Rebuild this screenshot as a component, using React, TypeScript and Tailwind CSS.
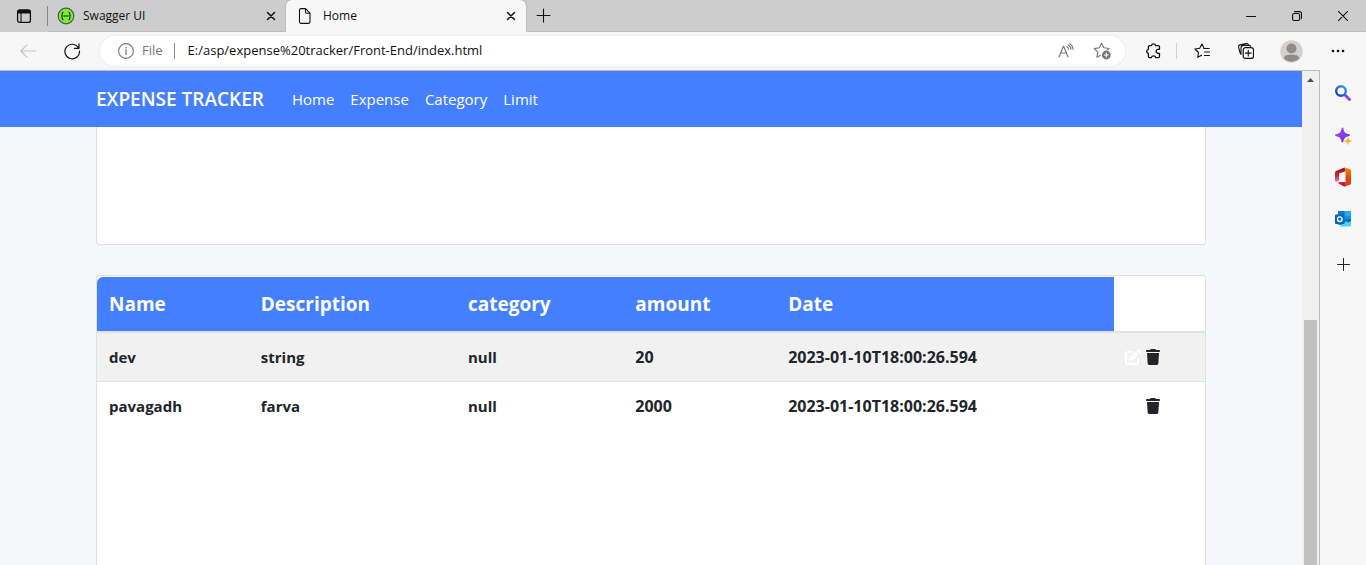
import React from "react";
import { FaPenToSquare, FaTrash } from "react-icons/fa6";

type Expense = {
  name: string;
  description: string;
  category: string;
  amount: string;
  date: string;
};

const expenses: Expense[] = [
  { name: "dev", description: "string", category: "null", amount: "20", date: "2023-01-10T18:00:26.594" },
  { name: "pavagadh", description: "farva", category: "null", amount: "2000", date: "2023-01-10T18:00:26.594" },
];

const links = ["Home", "Expense", "Category", "Limit"];
const columns = ["Name", "Description", "category", "amount", "Date"];

type IconProps = { size?: number; className?: string; children: React.ReactNode };

function Line({ size = 16, className = "", children }: IconProps) {
  return (
    <svg
      width={size}
      height={size}
      viewBox={`0 0 ${size} ${size}`}
      fill="none"
      stroke="currentColor"
      strokeWidth="1.1"
      strokeLinecap="round"
      strokeLinejoin="round"
      className={className}
      aria-hidden="true"
    >
      {children}
    </svg>
  );
}

function CloseTab() {
  return (
    <button aria-label="Close tab" className="flex size-6 shrink-0 items-center justify-center text-[#111]">
      <Line size={10}>
        <path d="M1.500 1.500l7 7M8.500 1.500l-7 7" strokeWidth="1.500" />
      </Line>
    </button>
  );
}

function TabStrip() {
  return (
    <div className="flex h-8 shrink-0 bg-[#cdcdcd] text-xs text-[#111]">
      <button aria-label="Tab actions" className="flex w-[47px] items-center justify-center">
        <Line>
          <rect x="1.600" y="2.100" width="12.800" height="12.300" rx="2" strokeWidth="1.300" />
          <path d="M1.600 5V4a2 2 0 0 1 2-2h8.800a2 2 0 0 1 2 2v1z" fill="currentColor" />
          <path d="M5 5v9" />
        </Line>
      </button>
      <span className="my-auto h-5 w-px bg-[#858585]" />
      <div className="flex w-[238px] items-center border-b border-[#bdbdbd] pl-[9px] pr-[3px]">
        <svg width="18" height="18" viewBox="0 0 18 18" aria-hidden="true">
          <circle cx="9" cy="9" r="7.800" fill="#85ea2d" stroke="#3b6652" strokeWidth="1.200" />
          <path
            d="M6.500 5.300c-1.300 0-1.200.8-1.200 2 0 1-.3 1.700-1.200 1.700.9 0 1.200.7 1.200 1.700 0 1.200-.1 2 1.200 2M11.500 5.300c1.300 0 1.200.8 1.200 2 0 1 .3 1.700 1.200 1.700-.9 0-1.200.7-1.200 1.700 0 1.200.1 2-1.200 2"
            fill="none"
            stroke="#173647"
            strokeWidth="1.200"
          />
          <path d="M6.500 9h5" stroke="#173647" strokeWidth="1.500" strokeDasharray="1.400 .5" />
        </svg>
        <span className="ml-2 flex-1">Swagger UI</span>
        <CloseTab />
      </div>
      <div className="flex w-[240px] items-center rounded-t-md bg-[#f7f7f7] pl-[11px] pr-[3px] shadow-[0_0_2px_#999]">
        <Line className="text-[#111]">
          <path d="M2.500 2a1.500 1.500 0 0 1 1.500-1.400h4.500L13 5.200v8.600a1.500 1.500 0 0 1-1.500 1.600H4a1.500 1.500 0 0 1-1.500-1.600zM8.500.600v3.200A1.300 1.300 0 0 0 9.800 5.200H13" />
        </Line>
        <span className="ml-[10px] flex-1">Home</span>
        <CloseTab />
      </div>
      <div className="flex flex-1 border-b border-[#bdbdbd]">
        <button aria-label="New tab" className="flex w-[35px] items-center justify-center">
          <Line size={15}>
            <path d="M7.500 1v13M1 7.500h13" />
          </Line>
        </button>
      </div>
      <div className="flex border-b border-[#bdbdbd]">
        <button aria-label="Minimize" className="flex w-[46px] items-center justify-center">
          <Line size={10}>
            <path d="M0 5.500h10" />
          </Line>
        </button>
        <button aria-label="Restore" className="flex w-[46px] items-center justify-center">
          <Line size={10}>
            <rect x=".6" y="2.500" width="7" height="7" rx="1.500" />
            <path d="M2.500.600H7.500a2 2 0 0 1 2 2v5" />
          </Line>
        </button>
        <button aria-label="Close" className="flex w-[46px] items-center justify-center">
          <Line size={10}>
            <path d="M.3.300l9.400 9.400M9.700.300L.3 9.700" />
          </Line>
        </button>
      </div>
    </div>
  );
}

function Toolbar() {
  return (
    <div className="flex h-[38px] shrink-0 items-center bg-[#f7f7f7] pr-[5px] text-[#111]">
      <button aria-label="Back" disabled className="flex w-14 justify-center text-[#c4c4c4]">
        <Line>
          <path d="M15.500 8H.7M7 1.800L.7 8 7 14.200" />
        </Line>
      </button>
      <button aria-label="Refresh" className="flex w-8 justify-center">
        <Line size={18}>
          <path d="M15.600 6A7.300 7.300 0 1 0 16.500 9M16 1.800v4.500h-4.500" strokeWidth="1.200" />
        </Line>
      </button>
      <div className="ml-3 flex h-[30px] flex-1 items-center rounded-full bg-white pl-[18px] pr-[14px] shadow-[0_0_3px_#e4e4e4]">
        <Line className="shrink-0 text-[#757575]">
          <circle cx="8" cy="8" r="7.400" />
          <path d="M8 7v4.500M8 4.300v.5" strokeWidth="1.300" />
        </Line>
        <span className="ml-2 text-[13px] text-[#757575]">File</span>
        <span className="ml-[11px] h-4 w-px bg-[#8a8a8a]" />
        <input
          aria-label="Address"
          defaultValue="E:/asp/expense%20tracker/Front-End/index.html"
          className="ml-[13px] min-w-0 flex-1 bg-transparent text-[13px] outline-none"
        />
        <button aria-label="Read aloud" className="flex w-[54px] justify-center text-[#757575]">
          <Line>
            <path d="M1 14L5.500 3 10 14M2.500 10h6M9 3.700c1 .7 1.400 1.500 1.400 2.600M10.300 2c1.700 1 2.500 2.300 2.500 4.300M11.800.700c2.200 1.300 3.200 3 3.200 5.600" />
          </Line>
        </button>
        <button aria-label="Add to favorites" className="flex w-[18px] justify-center text-[#757575]">
          <Line size={18}>
            <path d="M14.300 7.500l2-1-5.300-.7L8.500 1.200 6.200 5.800l-5 .8 3.600 3.500-.9 5.100 3.300-1.700" />
            <circle cx="13.300" cy="13" r="4.400" fill="currentColor" stroke="none" />
            <path d="M13.300 11v4M11.300 13h4" stroke="#fff" />
          </Line>
        </button>
      </div>
      <button aria-label="Extensions" className="ml-[5px] flex w-[46px] justify-center">
        <Line>
          <path
            d="M3.400 4A1.300 1.300 0 0 1 4.700 2.700h1.700a2.200 2.200 0 0 1 4.300 0h2.500A1.300 1.300 0 0 1 14.500 4v2.300h-1.300a2 2 0 0 0 0 4h1.300v3a1.300 1.300 0 0 1-1.300 1.300h-2.500a2.200 2.200 0 0 0-4.300 0H4.700a1.300 1.300 0 0 1-1.300-1.300v-2.700a2.200 2.200 0 0 1 0-4.300z"
            strokeWidth="1.300"
          />
        </Line>
      </button>
      <span className="h-4 w-px bg-[#cfcfcf]" />
      <button aria-label="Favorites" className="ml-[2px] flex w-[46px] justify-center">
        <Line>
          <path d="M7.500 12.200L3.700 14.300l.8-4.800L.9 6l4.800-.7L7.900.900l2.200 4.400M9.800 5.500h5.400M10.500 9h5M10.500 12.500h5" />
        </Line>
      </button>
      <button aria-label="Collections" className="flex w-[42px] justify-center">
        <Line>
          <rect x="5.200" y="4.700" width="10.300" height="10.700" rx="2.200" strokeWidth="1.200" />
          <path d="M10.300 7.300v5.600M7.500 10.100h5.600M3 11.300A4 4 0 0 1 1.800 9L.6 4.200A2 2 0 0 1 2 1.900L8.200.600a2 2 0 0 1 2.300 1.500M3 11V5a2.600 2.600 0 0 1 2.500-2.600H11a2 2 0 0 1 1.700 1" />
        </Line>
      </button>
      <button aria-label="Profile" className="flex w-12 justify-center">
        <svg width="23" height="23" viewBox="0 0 23 23" aria-hidden="true">
          <circle cx="11.500" cy="11.500" r="11.300" fill="#d3d1ce" />
          <circle cx="11.500" cy="8.500" r="5" fill="#8f8b88" />
          <path d="M4 18.500c0-3 2-3.800 7.500-3.800s7.500.8 7.500 3.800a10.500 10.500 0 0 1-15 0z" fill="#8f8b88" />
        </svg>
      </button>
      <button aria-label="Settings and more" className="flex w-[46px] justify-center">
        <svg width="14" height="4" viewBox="0 0 14 4" fill="currentColor" aria-hidden="true">
          <circle cx="2" cy="2" r="1.300" />
          <circle cx="7" cy="2" r="1.300" />
          <circle cx="12" cy="2" r="1.300" />
        </svg>
      </button>
    </div>
  );
}

function Sidebar() {
  return (
    <aside className="flex w-[47px] shrink-0 flex-col border-l border-[#bdbdbd] bg-[#f7f7f7] pt-px text-[#222]">
      <button aria-label="Search" className="flex h-11 items-center justify-center">
        <svg width="16" height="16" viewBox="0 0 16 16" fill="none" aria-hidden="true">
          <defs>
            <linearGradient id="lens" x1="0" y1="1" x2="1" y2="0">
              <stop stopColor="#103cc0" />
              <stop offset="1" stopColor="#3ba0ea" />
            </linearGradient>
          </defs>
          <path d="M10.500 10.500l4 4" stroke="#8a3ff0" strokeWidth="2.800" strokeLinecap="round" />
          <circle cx="6" cy="6" r="4.800" stroke="url(#lens)" strokeWidth="2.400" />
        </svg>
      </button>
      <button aria-label="Discover" className="flex h-[41px] items-center justify-center">
        <svg width="18" height="18" viewBox="0 0 18 18" aria-hidden="true">
          <defs>
            <linearGradient id="spark" x1="0" y1="0" x2="1" y2="1">
              <stop stopColor="#b14df5" />
              <stop offset="1" stopColor="#5b2fd6" />
            </linearGradient>
          </defs>
          <path d="M8.500.500c.5 0 .8.400.9.900.6 3.700 1.700 4.900 5.900 5.900.9.200.9 1.400 0 1.600-4.200 1-5.300 2.200-5.900 5.900-.2 1-1.600 1-1.800 0C7 11.100 5.900 9.900 1.700 8.900c-.9-.2-.9-1.400 0-1.600C5.900 6.300 7 5.100 7.600 1.400c.1-.5.400-.9.900-.9z" fill="url(#spark)" />
          <path d="M14 10.500c.4 2.200 1.200 3 3.500 3.500-2.300.5-3.100 1.300-3.500 3.500-.4-2.200-1.200-3-3.500-3.500 2.300-.5 3.100-1.300 3.500-3.500z" fill="#f8b31b" stroke="#f8b31b" strokeWidth=".5" />
        </svg>
      </button>
      <button aria-label="Office" className="flex h-[42px] items-center justify-center">
        <svg width="16" height="20" viewBox="0 0 16 20" aria-hidden="true">
          <defs>
            <linearGradient id="officeLeft" x1="0" y1="0" x2="0" y2="1">
              <stop stopColor="#a01010" />
              <stop offset=".55" stopColor="#b92a35" />
              <stop offset="1" stopColor="#ef7fb4" />
            </linearGradient>
            <linearGradient id="officeRight" x1="0" y1="0" x2="0" y2="1">
              <stop stopColor="#f58a0c" />
              <stop offset=".6" stopColor="#dd4410" />
            </linearGradient>
          </defs>
          <path d="M9.500.500L15 2.300a1.500 1.500 0 0 1 1 1.500v12.400a1.500 1.500 0 0 1-1 1.500l-5.500 1.800 1-3.500V4z" fill="url(#officeRight)" />
          <path d="M9.500.500L1.400 3.800A2 2 0 0 0 0 5.700v7.900c0 1 .7 1.600 1.700 1.200l1.500-.6a1.500 1.500 0 0 0 .9-1.400V6.500l6.400-2.300z" fill="url(#officeLeft)" />
          <path d="M3.500 15.300l7-.2v3.400c-.1.700-.8 1.100-1.500.9L4 16.700c-.9-.400-1.100-1-.5-1.400z" fill="#ca1630" />
        </svg>
      </button>
      <button aria-label="Outlook" className="flex h-[42px] items-center justify-center">
        <svg width="16" height="16" viewBox="0 0 16 16" aria-hidden="true">
          <rect x="3" width="13" height="14" rx="1" fill="#1490df" />
          <path d="M9.500 0H15a1 1 0 0 1 1 1v4H9.500z" fill="#28a8ea" />
          <path d="M4 0h5.500v4H3V1a1 1 0 0 1 1-1z" fill="#0a78cc" />
          <path d="M4 15.500h11a1 1 0 0 0 1-1V8l-7 4z" fill="#50d0f8" />
          <path d="M16 8v2l-2.500 1.500L9 8.500z" fill="#1267ad" />
          <rect y="3.500" width="9.500" height="9.500" rx="1" fill="#0864bd" />
          <circle cx="4.800" cy="8.200" r="2.300" fill="none" stroke="#fff" strokeWidth="1.400" />
        </svg>
      </button>
      <button aria-label="Customize sidebar" className="flex h-12 items-center justify-center">
        <Line size={13}>
          <path d="M6.500.500v12M.5 6.500h12" strokeWidth="1" />
        </Line>
      </button>
    </aside>
  );
}

function ExpenseTable() {
  return (
    <table className="w-full table-fixed border-separate border-spacing-0 text-left text-[15px] leading-6 font-bold text-[#212529]">
      <colgroup>
        <col className="w-[13.7%]" />
        <col className="w-[18.7%]" />
        <col className="w-[15.1%]" />
        <col className="w-[13.8%]" />
        <col className="w-[30.5%]" />
        <col className="w-[8.2%]" />
      </colgroup>
      <thead>
        <tr className="text-[19px] leading-[30px] text-white">
          {columns.map((title) => (
            <th key={title} className="border-b-2 border-[#dee2e6] bg-[#447fff] p-3 first:rounded-tl-md">
              {title}
            </th>
          ))}
          <td className="border-b-2 border-[#dee2e6]" />
        </tr>
      </thead>
      <tbody>
        {expenses.map((row) => (
          <tr key={row.name} className="odd:bg-[#f1f1f1]">
            <td className="border-b border-[#dee2e6] p-3 in-[tr:last-child]:border-transparent">{row.name}</td>
            <td className="border-b border-[#dee2e6] p-3 in-[tr:last-child]:border-transparent">{row.description}</td>
            <td className="border-b border-[#dee2e6] p-3 in-[tr:last-child]:border-transparent">{row.category}</td>
            <td className="border-b border-[#dee2e6] p-3 text-[16px] in-[tr:last-child]:border-transparent">{row.amount}</td>
            <td className="border-b border-[#dee2e6] p-3 text-[16px] in-[tr:last-child]:border-transparent">{row.date}</td>
            <td className="border-b border-[#dee2e6] py-3 pl-[11px] in-[tr:last-child]:border-transparent">
              <div className="flex items-center gap-1">
                <button aria-label={`Edit ${row.name}`} className="text-white">
                  <FaPenToSquare size={16} />
                </button>
                <button aria-label={`Delete ${row.name}`}>
                  <FaTrash size={16} />
                </button>
              </div>
            </td>
          </tr>
        ))}
      </tbody>
    </table>
  );
}

export default function App() {
  return (
    <div className="flex h-screen flex-col overflow-hidden font-['Open_Sans','Noto_Sans',sans-serif]">
      <TabStrip />
      <Toolbar />
      <div className="flex min-h-0 flex-1">
        <div className="flex min-w-0 flex-1 border-t border-[#bdbdbd]">
          <main className="flex min-w-0 flex-1 flex-col overflow-hidden bg-[#f5f7fb]">
            <nav className="h-14 shrink-0 bg-[#447fff] text-white">
              <div className="mx-auto flex h-full max-w-[1110px] items-center gap-7">
                <a href="#" className="text-[19px] font-semibold">
                  EXPENSE TRACKER
                </a>
                <div className="flex gap-4 text-[15px]">
                  {links.map((label) => (
                    <a key={label} href="#">
                      {label}
                    </a>
                  ))}
                </div>
              </div>
            </nav>
            <div className="mx-auto flex w-full max-w-[1110px] flex-1 flex-col gap-[30px]">
              <section className="h-[118px] shrink-0 rounded-b border border-t-0 border-[#dfe1e3] bg-white" />
              <section className="flex-1 rounded-t border border-b-0 border-[#dfe1e3] bg-white pt-px">
                <ExpenseTable />
              </section>
            </div>
          </main>
          <div className="flex w-[17px] shrink-0 flex-col items-center bg-[#f0f0f0]">
            <svg width="7" height="17" viewBox="0 0 7 17" fill="#505050" aria-hidden="true">
              <path d="M0 11L3.500 7 7 11z" />
            </svg>
            <div className="h-[47%] shrink-0" />
            <div className="w-[13px] flex-1 bg-[#c1c1c1]" />
          </div>
        </div>
        <Sidebar />
      </div>
    </div>
  );
}
